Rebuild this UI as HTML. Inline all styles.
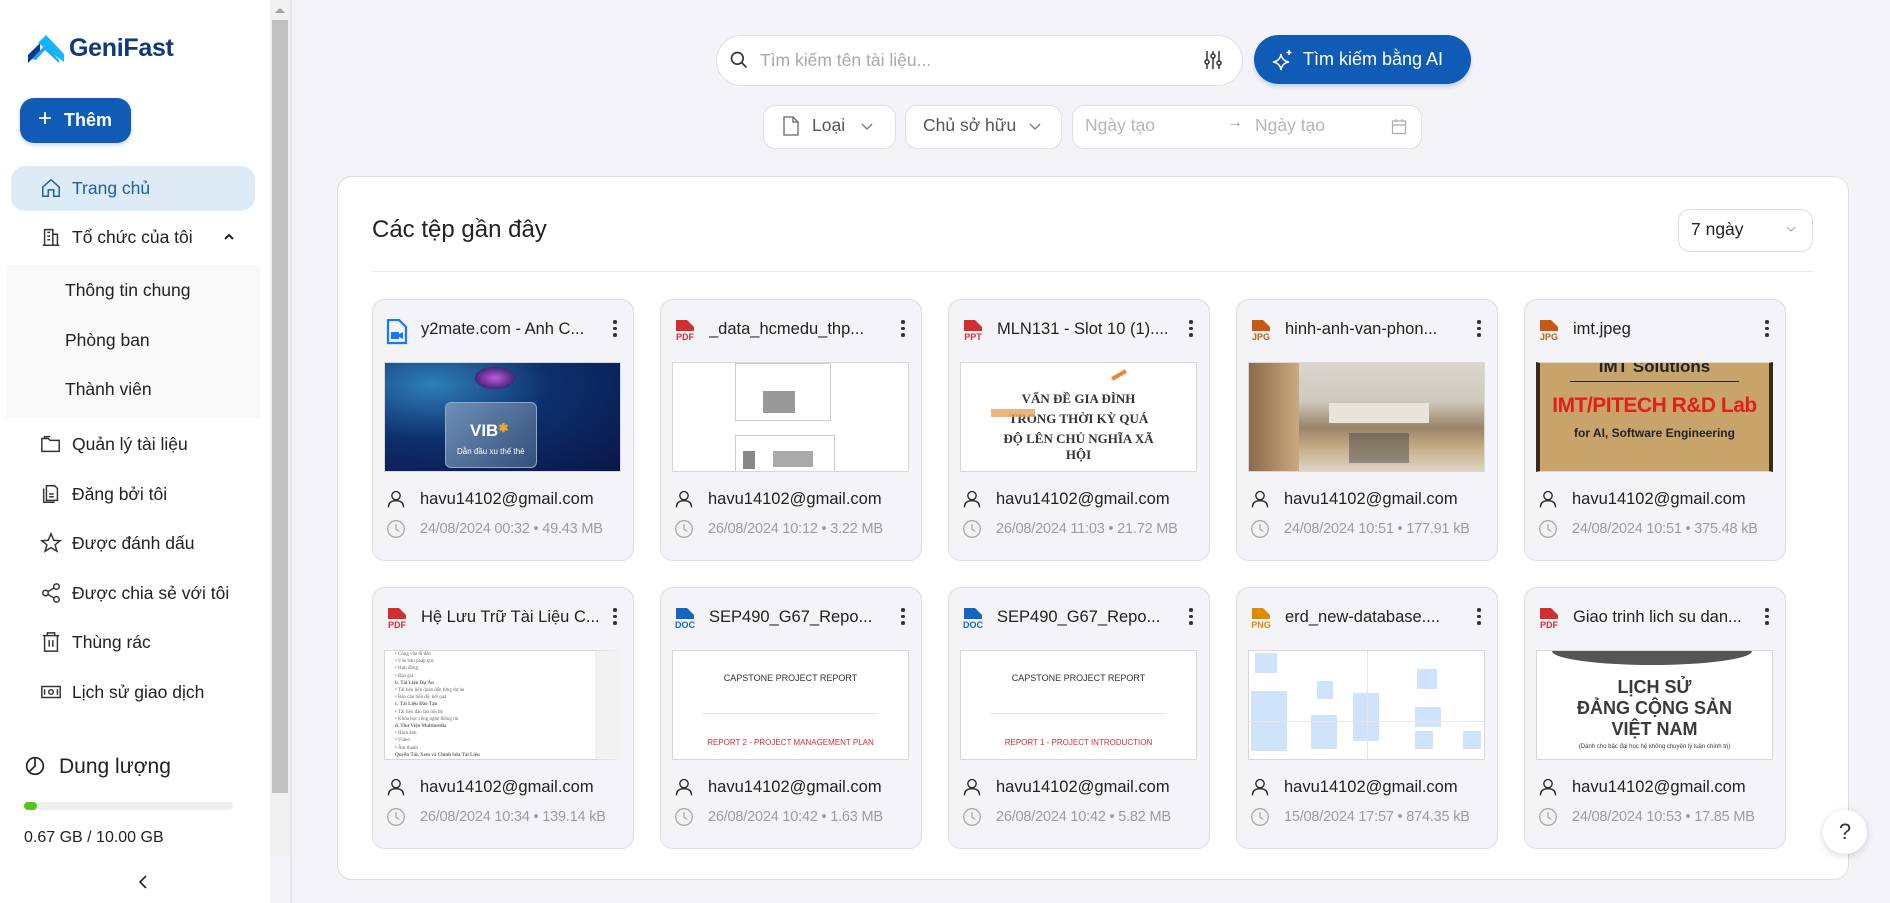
<!DOCTYPE html>
<html><head><meta charset="utf-8">
<style>
*{box-sizing:border-box;margin:0;padding:0}
body{width:1890px;height:903px;overflow:hidden;background:#f4f4f8;font-family:"Liberation Sans",sans-serif;color:#222;position:relative}
.abs{position:absolute}
#side{position:absolute;left:0;top:0;width:270px;height:903px;background:#fff}
#sb{position:absolute;left:270px;top:0;width:20px;height:856px;background:#f1f1f1}
#sb .th{position:absolute;left:2px;top:20px;width:16px;height:773px;background:#c1c1c1}
#sbb{position:absolute;left:290px;top:0;width:2px;height:903px;background:#e6e6ea}
.nav{position:absolute;left:40px;font-size:17.5px;color:#222;display:flex;align-items:center;height:24px}
.nav svg{width:22px;height:22px;margin-right:10px;fill:none;stroke:#333;stroke-width:1.6}
.sub{position:absolute;left:65px;font-size:17.5px;color:#222}
.card{position:absolute;width:262px;height:262px;background:#f4f4f8;border:1px solid #dcdce3;border-radius:13px}
.card .ic{position:absolute;left:13px;top:19px;width:22px;height:26px}
.card .nm{position:absolute;left:48px;top:20px;font-size:16.5px;color:#222;white-space:nowrap;width:190px;overflow:hidden}
.card .dt{position:absolute;right:16px;top:20px;width:4px;height:20px}
.card .dt i{display:block;width:3.5px;height:3.5px;border-radius:50%;background:#333;margin-bottom:3px}
.card .tb{position:absolute;left:11px;top:62px;width:237px;height:110px;border:1px solid #d8d8dc;background:#fff;overflow:hidden}
.card .em{position:absolute;left:13px;top:189px;font-size:16.5px;color:#222;display:flex;align-items:center}
.card .em svg,.card .da svg{width:20px;height:20px;margin-right:14px;fill:none;stroke-width:1.6}
.card .da{position:absolute;left:13px;top:219px;font-size:14.5px;color:#9b9ba3;display:flex;align-items:center;letter-spacing:-.2px}
.lbl{position:absolute;font-size:9px;font-weight:bold;width:24px;text-align:center}
</style></head><body>

<div id="side">
  <svg class="abs" style="left:28px;top:33px" width="36" height="30" viewBox="0 0 36 30">
    <path d="M0 30 L0 22 L12 10 L12 18 Z" fill="#0d3a8a"/>
    <path d="M4 26 L17 12 L31 27 L31 30 L17 17 L8 27 Z" fill="#20a7f0"/>
    <path d="M10 10 L18 2 L36 21 L36 29 Z" fill="#12b5ff"/>
  </svg>
  <div class="abs" style="left:69px;top:34px;font-size:25px;font-weight:bold;color:#0d3a7a;letter-spacing:-.3px">GeniFast</div>
  <div class="abs" style="left:20px;top:98px;width:111px;height:45px;background:#0f5bb5;border-radius:14px;color:#fff;font-size:18px;font-weight:bold;display:flex;align-items:center;padding-left:18px;box-shadow:0 2px 4px rgba(15,91,181,.25)"><span style="font-weight:normal;font-size:24px;margin-right:12px;margin-top:-3px">+</span>Thêm</div>
  <div class="abs" style="left:11px;top:166px;width:244px;height:45px;background:#dcebf5;border-radius:14px"></div>
  <div class="nav" style="top:176px;color:#1f5fa5"><svg viewBox="0 0 24 24" style="stroke:#1f5fa5"><path d="M3 11 L12 3 L21 11 V21 H15 V14 H9 V21 H3 Z"/></svg>Trang chủ</div>
  <div class="nav" style="top:225px"><svg viewBox="0 0 24 24"><path d="M3 21H21M5 21V4H14V21M14 9H19V21M8 7H11M8 11H11M8 15H11"/></svg>Tổ chức của tôi</div>
  <svg class="abs" style="left:223px;top:232px" width="12" height="10" viewBox="0 0 12 10"><path d="M2 7 L6 3 L10 7" stroke="#222" stroke-width="2" fill="none"/></svg>
  <div class="abs" style="left:6px;top:265px;width:254px;height:153px;background:#f9f9fa"></div>
  <div class="sub" style="top:280px">Thông tin chung</div>
  <div class="sub" style="top:330px">Phòng ban</div>
  <div class="sub" style="top:379px">Thành viên</div>
  <div class="nav" style="top:432px"><svg viewBox="0 0 24 24"><path d="M2 6H9L11 8H21V20H2Z M5 6V4H11"/></svg>Quản lý tài liệu</div>
  <div class="nav" style="top:482px"><svg viewBox="0 0 24 24"><path d="M7 3H16L19 6V19H7Z M4 6V21H16 M10 12H15M10 15H15"/></svg>Đăng bởi tôi</div>
  <div class="nav" style="top:531px"><svg viewBox="0 0 24 24"><path d="M12 2 L15 9 L22 9.5 L16.5 14 L18.5 21 L12 17 L5.5 21 L7.5 14 L2 9.5 L9 9 Z"/></svg>Được đánh dấu</div>
  <div class="nav" style="top:581px"><svg viewBox="0 0 24 24"><circle cx="18" cy="5" r="3"/><circle cx="6" cy="12" r="3"/><circle cx="18" cy="19" r="3"/><path d="M8.6 10.5L15.4 6.5M8.6 13.5L15.4 17.5"/></svg>Được chia sẻ với tôi</div>
  <div class="nav" style="top:630px"><svg viewBox="0 0 24 24"><path d="M3 5H21M8 5V2H16V5M5 5V22H19V5M10 10V17M14 10V17"/></svg>Thùng rác</div>
  <div class="nav" style="top:680px"><svg viewBox="0 0 24 24"><rect x="2" y="6" width="20" height="12"/><circle cx="12" cy="12" r="2.5"/><path d="M5 9V15M19 9V15"/></svg>Lịch sử giao dịch</div>
  <svg class="abs" style="left:25px;top:756px" width="20" height="20" viewBox="0 0 24 24" fill="none" stroke="#222" stroke-width="2"><circle cx="12" cy="12" r="10"/><path d="M12 2V12L5 19"/></svg>
  <div class="abs" style="left:59px;top:755px;font-size:21px;color:#222">Dung lượng</div>
  <div class="abs" style="left:24px;top:802px;width:209px;height:8px;background:#efefef;border-radius:4px"><div style="width:13px;height:8px;background:#52c41a;border-radius:4px"></div></div>
  <div class="abs" style="left:24px;top:829px;font-size:16px;color:#222">0.67 GB / 10.00 GB</div>
  <svg class="abs" style="left:136px;top:873px" width="14" height="18" viewBox="0 0 14 18"><path d="M10 3 L4 9 L10 15" stroke="#222" stroke-width="1.6" fill="none"/></svg>
</div>
<div id="sb"><div class="th"></div><svg class="abs" style="left:4px;top:6px" width="12" height="8"><path d="M1 7L6 2L11 7Z" fill="#a3a3a3"/></svg></div>
<div id="sbb"></div>

<div class="abs" style="left:716px;top:35px;width:527px;height:51px;background:#fff;border:1px solid #dedee3;border-radius:26px"></div>
<svg class="abs" style="left:729px;top:50px" width="20" height="20" viewBox="0 0 24 24" fill="none" stroke="#333" stroke-width="2"><circle cx="10" cy="10" r="7"/><path d="M15 15L21 21"/></svg>
<div class="abs" style="left:760px;top:50px;font-size:17.5px;color:#a8a8b0">Tìm kiếm tên tài liệu...</div>
<svg class="abs" style="left:1203px;top:49px" width="20" height="22" viewBox="0 0 20 22" fill="none" stroke="#333" stroke-width="1.5"><path d="M4 2V20M10 2V20M16 2V20"/><circle cx="4" cy="13" r="2" fill="#fff"/><circle cx="10" cy="7" r="2" fill="#fff"/><circle cx="16" cy="14" r="2" fill="#fff"/></svg>
<div class="abs" style="left:1254px;top:35px;width:217px;height:49px;background:#0f5bb5;border-radius:25px;box-shadow:0 3px 5px rgba(15,91,181,.2)"></div>
<svg class="abs" style="left:1271px;top:48px" width="24" height="24" viewBox="0 0 24 24" fill="none" stroke="#fff" stroke-width="1.5"><path d="M10 6 Q11 13 18 14 Q11 15 10 22 Q9 15 2 14 Q9 13 10 6Z M18 2V7M15.5 4.5H20.5"/></svg>
<div class="abs" style="left:1303px;top:49px;font-size:18px;color:#fff">Tìm kiếm bằng AI</div>

<div class="abs" style="left:763px;top:105px;width:133px;height:44px;background:#fff;border:1px solid #dedee3;border-radius:12px"></div>
<svg class="abs" style="left:783px;top:116px" width="16" height="20" viewBox="0 0 16 20" fill="none" stroke="#666" stroke-width="1.3"><path d="M1 1H10L15 6V19H1Z M10 1V6H15"/></svg>
<div class="abs" style="left:812px;top:115px;font-size:17.5px;color:#555">Loại</div>
<svg class="abs" style="left:860px;top:122px" width="14" height="9"><path d="M2 2L7 7L12 2" stroke="#777" stroke-width="1.3" fill="none"/></svg>
<div class="abs" style="left:905px;top:105px;width:157px;height:44px;background:#fff;border:1px solid #dedee3;border-radius:12px"></div>
<div class="abs" style="left:923px;top:115px;font-size:17.5px;color:#555">Chủ sở hữu</div>
<svg class="abs" style="left:1028px;top:122px" width="14" height="9"><path d="M2 2L7 7L12 2" stroke="#777" stroke-width="1.3" fill="none"/></svg>
<div class="abs" style="left:1072px;top:105px;width:350px;height:44px;background:#fff;border:1px solid #dedee3;border-radius:12px"></div>
<div class="abs" style="left:1085px;top:115px;font-size:17.5px;color:#b5b5bb">Ngày tạo</div>
<div class="abs" style="left:1227px;top:114px;font-size:16px;color:#999">→</div>
<div class="abs" style="left:1255px;top:115px;font-size:17.5px;color:#b5b5bb">Ngày tạo</div>
<svg class="abs" style="left:1391px;top:118px" width="16" height="17" viewBox="0 0 16 17" fill="none" stroke="#aaa" stroke-width="1.2"><rect x="1.5" y="3" width="13" height="12.5"/><path d="M1.5 7H14.5M5 1V4M11 1V4"/></svg>

<div class="abs" style="left:337px;top:176px;width:1512px;height:704px;background:#fff;border:1px solid #dcdce2;border-radius:15px"></div>
<div class="abs" style="left:372px;top:216px;font-size:24px;color:#222">Các tệp gần đây</div>
<div class="abs" style="left:1678px;top:209px;width:135px;height:43px;background:#fff;border:1px solid #dcdce2;border-radius:12px"></div>
<div class="abs" style="left:1691px;top:219px;font-size:17.5px;color:#222">7 ngày</div>
<svg class="abs" style="left:1785px;top:225px" width="12" height="8"><path d="M2 2L6 6L10 2" stroke="#aaa" stroke-width="1.2" fill="none"/></svg>
<div class="abs" style="left:372px;top:271px;width:1441px;height:1px;background:#e6e6ea"></div>

<div class="card" style="left:372px;top:299px">
  <svg class="ic" viewBox="0 0 22 26"><path d="M2 1H13L20 8V24H2Z" fill="none" stroke="#1677ff" stroke-width="2.2"/><rect x="5" y="13" width="8" height="7" fill="#1677ff"/><path d="M13 15L17 13V20L13 18Z" fill="#1677ff"/></svg>
  <div class="nm">y2mate.com - Anh C...</div><div class="dt"><i></i><i></i><i></i></div>
  <div class="tb" style="background:radial-gradient(ellipse at 20% 20%,#2f7fb8 0%,#0d2f6b 45%,#0a1648 100%)">
    <div class="abs" style="left:90px;top:4px;width:40px;height:22px;background:radial-gradient(#c05bd8,#44267a 70%,transparent 72%)"></div>
    <div class="abs" style="left:60px;top:39px;width:92px;height:66px;border-radius:6px;background:linear-gradient(135deg,#6f8fb6,#33507a);border:1px solid #8fa8c8"></div>
    <div class="abs" style="left:85px;top:58px;color:#fff;font-weight:bold;font-size:17px">VIB<span style="color:#f5a623;font-size:12px;vertical-align:top">✱</span></div>
    <div class="abs" style="left:72px;top:84px;color:#fff;font-size:8px">Dẫn đầu xu thế thẻ</div>
  </div>
  <div class="em"><svg viewBox="0 0 24 24" stroke="#222"><circle cx="12" cy="8" r="5"/><path d="M3 22C3 16 7 14 12 14S21 16 21 22"/></svg>havu14102@gmail.com</div>
  <div class="da"><svg viewBox="0 0 24 24" stroke="#aaa"><circle cx="12" cy="12" r="10"/><path d="M12 6V12L16 15"/></svg>24/08/2024 00:32 • 49.43 MB</div>
</div>
<div class="card" style="left:660px;top:299px">
  <svg class="ic" viewBox="0 0 22 26"><path d="M2 1H13L20 8V12H2Z" fill="#d32f2f"/></svg><div class="lbl" style="left:12px;top:32px;color:#d32f2f">PDF</div>
  <div class="nm">_data_hcmedu_thp...</div><div class="dt"><i></i><i></i><i></i></div>
  <div class="tb"><div class="abs" style="left:62px;top:0;width:96px;height:58px;border:1px solid #ccc"></div><div class="abs" style="left:90px;top:28px;width:32px;height:22px;background:#999"></div><div class="abs" style="left:62px;top:72px;width:100px;height:40px;border:1px solid #ccc"></div><div class="abs" style="left:70px;top:88px;width:12px;height:18px;background:#888"></div><div class="abs" style="left:100px;top:88px;width:40px;height:16px;background:#aaa"></div></div>
  <div class="em"><svg viewBox="0 0 24 24" stroke="#222"><circle cx="12" cy="8" r="5"/><path d="M3 22C3 16 7 14 12 14S21 16 21 22"/></svg>havu14102@gmail.com</div>
  <div class="da"><svg viewBox="0 0 24 24" stroke="#aaa"><circle cx="12" cy="12" r="10"/><path d="M12 6V12L16 15"/></svg>26/08/2024 10:12 • 3.22 MB</div>
</div>
<div class="card" style="left:948px;top:299px">
  <svg class="ic" viewBox="0 0 22 26"><path d="M2 1H13L20 8V12H2Z" fill="#d32f2f"/></svg><div class="lbl" style="left:12px;top:32px;color:#d32f2f">PPT</div>
  <div class="nm">MLN131 - Slot 10 (1)....</div><div class="dt"><i></i><i></i><i></i></div>
  <div class="tb" style="font-family:'Liberation Serif',serif;text-align:center;color:#333"><div style="margin-top:28px;font-size:13px;font-weight:bold">VẤN ĐỀ GIA ĐÌNH</div><div style="font-size:13px;font-weight:bold;margin-top:4px">TRONG THỜI KỲ QUÁ</div><div style="font-size:13px;font-weight:bold;margin-top:4px">ĐỘ LÊN CHỦ NGHĨA XÃ</div><div style="font-size:13px;font-weight:bold">HỘI</div><div class="abs" style="left:150px;top:10px;width:16px;height:4px;background:#e8873a;transform:rotate(-30deg)"></div><div class="abs" style="left:30px;top:46px;width:44px;height:8px;background:#e8a15a;opacity:.8"></div></div>
  <div class="em"><svg viewBox="0 0 24 24" stroke="#222"><circle cx="12" cy="8" r="5"/><path d="M3 22C3 16 7 14 12 14S21 16 21 22"/></svg>havu14102@gmail.com</div>
  <div class="da"><svg viewBox="0 0 24 24" stroke="#aaa"><circle cx="12" cy="12" r="10"/><path d="M12 6V12L16 15"/></svg>26/08/2024 11:03 • 21.72 MB</div>
</div>
<div class="card" style="left:1236px;top:299px">
  <svg class="ic" viewBox="0 0 22 26"><path d="M2 1H13L20 8V12H2Z" fill="#c55a11"/></svg><div class="lbl" style="left:12px;top:32px;color:#c55a11">JPG</div>
  <div class="nm">hinh-anh-van-phon...</div><div class="dt"><i></i><i></i><i></i></div>
  <div class="tb" style="background:linear-gradient(180deg,#d9d6cf 0%,#cfc8bc 35%,#9a8468 60%,#c9b08a 80%,#ddd3c2 100%)"><div class="abs" style="left:0;top:0;width:50px;height:110px;background:linear-gradient(90deg,#8a6a48,#c9a97f)"></div><div class="abs" style="left:80px;top:40px;width:100px;height:20px;background:#e8e4dc"></div><div class="abs" style="left:100px;top:70px;width:60px;height:30px;background:#4a4a4a;opacity:.5"></div></div>
  <div class="em"><svg viewBox="0 0 24 24" stroke="#222"><circle cx="12" cy="8" r="5"/><path d="M3 22C3 16 7 14 12 14S21 16 21 22"/></svg>havu14102@gmail.com</div>
  <div class="da"><svg viewBox="0 0 24 24" stroke="#aaa"><circle cx="12" cy="12" r="10"/><path d="M12 6V12L16 15"/></svg>24/08/2024 10:51 • 177.91 kB</div>
</div>
<div class="card" style="left:1524px;top:299px">
  <svg class="ic" viewBox="0 0 22 26"><path d="M2 1H13L20 8V12H2Z" fill="#c55a11"/></svg><div class="lbl" style="left:12px;top:32px;color:#c55a11">JPG</div>
  <div class="nm">imt.jpeg</div><div class="dt"><i></i><i></i><i></i></div>
  <div class="tb" style="background:#c9a46a;text-align:center;font-weight:bold;border-left:4px solid #3a2a1a;border-right:4px solid #3a2a1a"><div style="margin-top:-6px;font-size:17px;color:#222">IMT Solutions</div><div style="height:1px;background:#222;margin:4px 30px"></div><div style="font-size:21px;color:#e0201a;margin-top:12px;letter-spacing:-.5px">IMT/PITECH R&amp;D Lab</div><div style="font-size:12px;color:#222;margin-top:8px">for AI, Software Engineering</div></div>
  <div class="em"><svg viewBox="0 0 24 24" stroke="#222"><circle cx="12" cy="8" r="5"/><path d="M3 22C3 16 7 14 12 14S21 16 21 22"/></svg>havu14102@gmail.com</div>
  <div class="da"><svg viewBox="0 0 24 24" stroke="#aaa"><circle cx="12" cy="12" r="10"/><path d="M12 6V12L16 15"/></svg>24/08/2024 10:51 • 375.48 kB</div>
</div>

<div class="card" style="left:372px;top:587px">
  <svg class="ic" viewBox="0 0 22 26"><path d="M2 1H13L20 8V12H2Z" fill="#d32f2f"/></svg><div class="lbl" style="left:12px;top:32px;color:#d32f2f">PDF</div>
  <div class="nm">Hệ Lưu Trữ Tài Liệu C...</div><div class="dt"><i></i><i></i><i></i></div>
  <div class="tb" style="font-family:'Liberation Serif',serif;font-size:5px;color:#666;line-height:7.2px;padding-left:10px;border-right:26px solid #f2f2f2">• Công văn đi đến<br>• Văn bản pháp quy<br>• Hợp đồng<br>• Báo giá<br><b>b. Tài Liệu Dự Án</b><br>• Tài liệu liên quan đến từng dự án<br>• Báo cáo tiến độ, kết quả<br><b>c. Tài Liệu Đào Tạo</b><br>• Tài liệu đào tạo nội bộ<br>• Khóa học công nghệ thông tin<br><b>d. Thư Viện Multimedia</b><br>• Hình ảnh<br>• Video<br>• Âm thanh<br><b>Quyền Tải, Xem và Chỉnh Sửa Tài Liệu</b><br><b>1. Ban Giám Đốc</b><br>• Xem: Tất cả tài liệu của công ty<br>• Tải: Tất cả tài liệu cần thiết</div>
  <div class="em"><svg viewBox="0 0 24 24" stroke="#222"><circle cx="12" cy="8" r="5"/><path d="M3 22C3 16 7 14 12 14S21 16 21 22"/></svg>havu14102@gmail.com</div>
  <div class="da"><svg viewBox="0 0 24 24" stroke="#aaa"><circle cx="12" cy="12" r="10"/><path d="M12 6V12L16 15"/></svg>26/08/2024 10:34 • 139.14 kB</div>
</div>
<div class="card" style="left:660px;top:587px">
  <svg class="ic" viewBox="0 0 22 26"><path d="M2 1H13L20 8V12H2Z" fill="#1565c0"/></svg><div class="lbl" style="left:12px;top:32px;color:#1565c0">DOC</div>
  <div class="nm">SEP490_G67_Repo...</div><div class="dt"><i></i><i></i><i></i></div>
  <div class="tb" style="text-align:center"><div style="margin-top:22px;font-size:9px;color:#333">CAPSTONE PROJECT REPORT</div><div style="height:1px;background:#dde6f0;margin:30px 30px 0"></div><div style="margin-top:24px;font-size:8px;color:#d32f2f">REPORT 2 - PROJECT MANAGEMENT PLAN</div></div>
  <div class="em"><svg viewBox="0 0 24 24" stroke="#222"><circle cx="12" cy="8" r="5"/><path d="M3 22C3 16 7 14 12 14S21 16 21 22"/></svg>havu14102@gmail.com</div>
  <div class="da"><svg viewBox="0 0 24 24" stroke="#aaa"><circle cx="12" cy="12" r="10"/><path d="M12 6V12L16 15"/></svg>26/08/2024 10:42 • 1.63 MB</div>
</div>
<div class="card" style="left:948px;top:587px">
  <svg class="ic" viewBox="0 0 22 26"><path d="M2 1H13L20 8V12H2Z" fill="#1565c0"/></svg><div class="lbl" style="left:12px;top:32px;color:#1565c0">DOC</div>
  <div class="nm">SEP490_G67_Repo...</div><div class="dt"><i></i><i></i><i></i></div>
  <div class="tb" style="text-align:center"><div style="margin-top:22px;font-size:9px;color:#333">CAPSTONE PROJECT REPORT</div><div style="height:1px;background:#dde6f0;margin:30px 30px 0"></div><div style="margin-top:24px;font-size:8px;color:#d32f2f">REPORT 1 - PROJECT INTRODUCTION</div></div>
  <div class="em"><svg viewBox="0 0 24 24" stroke="#222"><circle cx="12" cy="8" r="5"/><path d="M3 22C3 16 7 14 12 14S21 16 21 22"/></svg>havu14102@gmail.com</div>
  <div class="da"><svg viewBox="0 0 24 24" stroke="#aaa"><circle cx="12" cy="12" r="10"/><path d="M12 6V12L16 15"/></svg>26/08/2024 10:42 • 5.82 MB</div>
</div>
<div class="card" style="left:1236px;top:587px">
  <svg class="ic" viewBox="0 0 22 26"><path d="M2 1H13L20 8V12H2Z" fill="#e08a00"/></svg><div class="lbl" style="left:12px;top:32px;color:#e08a00">PNG</div>
  <div class="nm">erd_new-database....</div><div class="dt"><i></i><i></i><i></i></div>
  <div class="tb">
    <div class="abs" style="left:6px;top:2px;width:22px;height:20px;background:#cfe3fb"></div>
    <div class="abs" style="left:2px;top:40px;width:36px;height:60px;background:#cfe3fb"></div>
    <div class="abs" style="left:68px;top:30px;width:16px;height:18px;background:#cfe3fb"></div>
    <div class="abs" style="left:62px;top:64px;width:26px;height:34px;background:#cfe3fb"></div>
    <div class="abs" style="left:104px;top:42px;width:26px;height:48px;background:#cfe3fb"></div>
    <div class="abs" style="left:168px;top:18px;width:20px;height:20px;background:#cfe3fb"></div>
    <div class="abs" style="left:166px;top:56px;width:26px;height:20px;background:#cfe3fb"></div>
    <div class="abs" style="left:166px;top:80px;width:18px;height:18px;background:#cfe3fb"></div>
    <div class="abs" style="left:214px;top:80px;width:18px;height:18px;background:#cfe3fb"></div>
    <div class="abs" style="left:0;top:70px;width:237px;height:1px;background:#e6e6e6"></div>
    <div class="abs" style="left:118px;top:0;width:1px;height:110px;background:#e6e6e6"></div>
  </div>
  <div class="em"><svg viewBox="0 0 24 24" stroke="#222"><circle cx="12" cy="8" r="5"/><path d="M3 22C3 16 7 14 12 14S21 16 21 22"/></svg>havu14102@gmail.com</div>
  <div class="da"><svg viewBox="0 0 24 24" stroke="#aaa"><circle cx="12" cy="12" r="10"/><path d="M12 6V12L16 15"/></svg>15/08/2024 17:57 • 874.35 kB</div>
</div>
<div class="card" style="left:1524px;top:587px">
  <svg class="ic" viewBox="0 0 22 26"><path d="M2 1H13L20 8V12H2Z" fill="#d32f2f"/></svg><div class="lbl" style="left:12px;top:32px;color:#d32f2f">PDF</div>
  <div class="nm">Giao trinh lich su dan...</div><div class="dt"><i></i><i></i><i></i></div>
  <div class="tb" style="text-align:center;font-weight:bold;color:#3a3a3a"><div class="abs" style="left:15px;top:0;width:200px;height:14px;background:#555;border-radius:0 0 50% 50%/0 0 100% 100%"></div><div style="margin-top:26px;font-size:18px;line-height:21px">LỊCH SỬ<br>ĐẢNG CỘNG SẢN<br>VIỆT NAM</div><div style="font-size:6px;font-weight:normal;margin-top:4px">(Dành cho bậc đại học hệ không chuyên lý luận chính trị)</div></div>
  <div class="em"><svg viewBox="0 0 24 24" stroke="#222"><circle cx="12" cy="8" r="5"/><path d="M3 22C3 16 7 14 12 14S21 16 21 22"/></svg>havu14102@gmail.com</div>
  <div class="da"><svg viewBox="0 0 24 24" stroke="#aaa"><circle cx="12" cy="12" r="10"/><path d="M12 6V12L16 15"/></svg>24/08/2024 10:53 • 17.85 MB</div>
</div>
<div class="abs" style="left:1823px;top:810px;width:44px;height:44px;background:#fff;border-radius:50%;box-shadow:0 2px 8px rgba(0,0,0,.15);font-size:22px;color:#333;text-align:center;line-height:44px">?</div>
</body></html>
